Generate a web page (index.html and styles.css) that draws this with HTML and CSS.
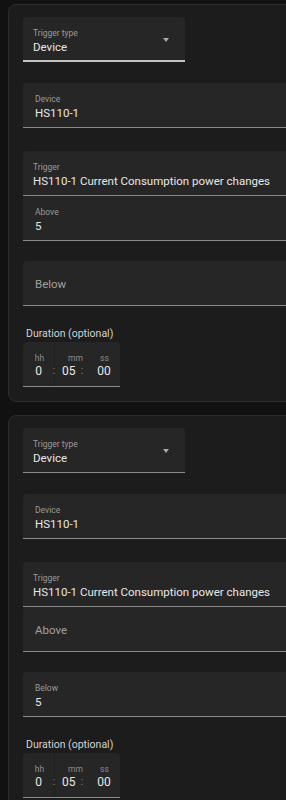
FILE: index.html
```html
<!DOCTYPE html>
<html lang="en">
<head>
    <meta charset="UTF-8">
    <meta name="viewport" content="width=device-width, initial-scale=1.0">
    <title>Device trigger</title>
    <link rel="stylesheet" href="styles.css">
</head>
<body>
    <div class="card">
        <div class="field select is-focused">
            <div class="label">Trigger type</div>
            <div class="value">Device</div>
            <span class="arrow"></span>
        </div>

        <div class="field wide indent space-select">
            <div class="label">Device</div>
            <div class="value">HS110-1</div>
        </div>

        <div class="field wide space-device">
            <div class="label">Trigger</div>
            <div class="value">HS110-1 Current Consumption power changes</div>
        </div>
        <div class="field wide indent">
            <div class="label">Above</div>
            <div class="value">5</div>
        </div>

        <div class="field wide indent empty space-limit">
            <div class="placeholder">Below</div>
        </div>

        <div class="duration">
            <div class="duration-label">Duration (optional)</div>
            <div class="time-box">
                <div class="unit-label hh">hh</div>
                <div></div>
                <div class="unit-label mm">mm</div>
                <div></div>
                <div class="unit-label ss">ss</div>
                <div class="unit-value hh">0</div>
                <div class="colon">:</div>
                <div class="unit-value mm">05</div>
                <div class="colon">:</div>
                <div class="unit-value ss">00</div>
            </div>
        </div>
    </div>

    <div class="card">
        <div class="field select">
            <div class="label">Trigger type</div>
            <div class="value">Device</div>
            <span class="arrow"></span>
        </div>

        <div class="field wide indent space-select">
            <div class="label">Device</div>
            <div class="value">HS110-1</div>
        </div>

        <div class="field wide space-device">
            <div class="label">Trigger</div>
            <div class="value">HS110-1 Current Consumption power changes</div>
        </div>
        <div class="field wide indent empty">
            <div class="placeholder">Above</div>
        </div>

        <div class="field wide indent space-limit">
            <div class="label">Below</div>
            <div class="value">5</div>
        </div>

        <div class="duration">
            <div class="duration-label">Duration (optional)</div>
            <div class="time-box">
                <div class="unit-label hh">hh</div>
                <div></div>
                <div class="unit-label mm">mm</div>
                <div></div>
                <div class="unit-label ss">ss</div>
                <div class="unit-value hh">0</div>
                <div class="colon">:</div>
                <div class="unit-value mm">05</div>
                <div class="colon">:</div>
                <div class="unit-value ss">00</div>
            </div>
        </div>
    </div>
</body>
</html>
```

FILE: styles.css
```css
* {
    margin: 0;
    padding: 0;
    box-sizing: border-box;
}

body {
    background: #111111;
    font-family: Roboto, 'Liberation Sans', sans-serif;
    color: #e1e1e1;
    overflow: hidden;
    padding: 4px 0 0 8px;
}

.card {
    width: 300px;
    background: #1c1c1c;
    border: 1px solid #2c2c2c;
    border-radius: 8px;
    padding: 12px 14px 14px 14px;
    margin-bottom: 13px;
}

/* Filled text field */
.field {
    position: relative;
    height: 45px;
    background: #262626;
    border-bottom: 1px solid #8a8a8a;
    border-radius: 4px 4px 0 0;
    padding: 10px 10px 0 10px;
}

.field.indent {
    padding-left: 12px;
}

.field.select {
    width: 162px;
}

.field.is-focused {
    border-bottom: 2px solid #c4c4c4;
}

.space-select {
    margin-top: 21px;
}

.space-device {
    margin-top: 23px;
}

.space-limit {
    margin-top: 20px;
}

.label {
    font-size: 8.5px;
    line-height: 12px;
    color: #9a9a9a;
}

.value {
    font-size: 11.5px;
    line-height: 16px;
    color: #e6e6e6;
    white-space: nowrap;
}

.field.empty {
    padding-top: 15px;
}

.placeholder {
    font-size: 11.5px;
    line-height: 16px;
    color: #a0a0a0;
}

.arrow {
    position: absolute;
    right: 16px;
    top: 21px;
    width: 0;
    height: 0;
    border-left: 3.5px solid transparent;
    border-right: 3.5px solid transparent;
    border-top: 4px solid #a8a8a8;
}

/* Duration picker */
.duration {
    margin-top: 20px;
}

.duration-label {
    font-size: 10.5px;
    line-height: 16px;
    color: #d2d2d2;
    padding-left: 3px;
}

.time-box {
    width: 97px;
    height: 45px;
    background: linear-gradient(to right, transparent 31px, #1f1f1f 31px, #1f1f1f 32px, transparent 32px), #262626;
    border-bottom: 1px solid #8a8a8a;
    border-radius: 4px 4px 0 0;
    display: grid;
    grid-template-columns: 29px 4px 24px 4px 36px;
    grid-template-rows: 21px 16px;
}

.unit-label {
    font-size: 8.5px;
    line-height: 10px;
    color: #8c8c8c;
    align-self: end;
    text-align: center;
}

.unit-label.hh {
    padding-left: 4px;
}

.unit-label.mm {
    padding-left: 12px;
    margin-right: -2px;
}

.unit-label.ss {
    padding-left: 5px;
}

.unit-value {
    font-size: 12px;
    line-height: 16px;
    color: #e6e6e6;
}

.unit-value.hh {
    text-align: center;
    padding-left: 2px;
}

.unit-value.mm {
    padding-left: 6px;
}

.unit-value.ss {
    text-align: center;
    padding-left: 4px;
}

.colon {
    font-size: 10px;
    line-height: 16px;
    color: #8c8c8c;
    text-align: center;
}
```
